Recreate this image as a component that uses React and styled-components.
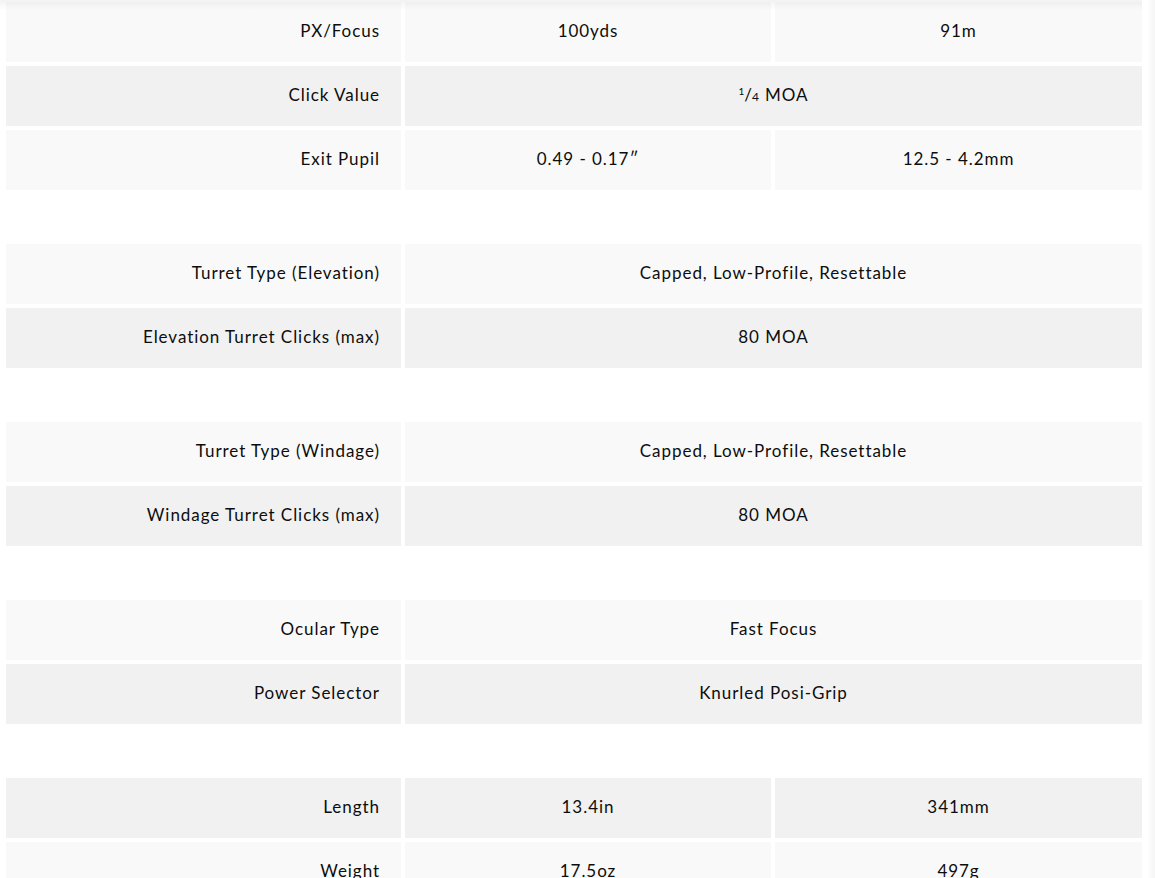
import styled, { createGlobalStyle } from "styled-components";

const GlobalStyle = createGlobalStyle`
  html, body {
    margin: 0;
    padding: 0;
    background: #ffffff;
  }
  body {
    font-family: Lato, "Open Sans", "Liberation Sans", sans-serif;
    color: #111;
    overflow: hidden;
  }
`;

const Page = styled.div`
  position: relative;
  padding: 2px 0 0 6px;
  width: 1136px;
  height: 876px;
  overflow: hidden;
`;

const TopShade = styled.div`
  position: absolute;
  left: 0;
  top: 0;
  width: 1155px;
  height: 10px;
  background: linear-gradient(to bottom, rgba(0, 0, 0, 0.05), rgba(0, 0, 0, 0));
  pointer-events: none;
`;

const SideShade = styled.div`
  position: fixed;
  right: 0;
  top: 0;
  width: 8px;
  height: 878px;
  background: linear-gradient(to left, rgba(0, 0, 0, 0.04), rgba(0, 0, 0, 0));
  pointer-events: none;
`;

const Group = styled.div`
  display: grid;
  grid-template-columns: 395px 366px 367px;
  grid-auto-rows: 60px;
  gap: 4px;
  margin-bottom: 54px;
`;

const Cell = styled.div`
  display: flex;
  align-items: center;
  justify-content: center;
  padding-bottom: 3px;
  box-sizing: border-box;
  background: ${(p) => (p.$dark ? "#f1f1f1" : "#f9f9f9")};
  font-size: 17px;
  letter-spacing: 0.95px;
  color: #0d0d0d;
  grid-column: ${(p) => (p.$span ? "span 2" : "auto")};
`;

const Label = styled(Cell)`
  justify-content: flex-end;
  padding-right: 21px;
`;

const Frac = styled.span`
  display: inline-flex;
  align-items: baseline;
  margin-right: 6px;
  letter-spacing: 0;
  sup {
    font-size: 10px;
    position: relative;
    top: -6px;
    vertical-align: baseline;
    line-height: 1;
  }
  sub {
    font-size: 12px;
    vertical-align: baseline;
    line-height: 1;
  }
`;

const groups = [
  [
    { label: "PX/Focus", values: ["100yds", "91m"] },
    { label: "Click Value", values: ["quarter"] },
    { label: "Exit Pupil", values: ["0.49 - 0.17″", "12.5 - 4.2mm"] },
  ],
  [
    { label: "Turret Type (Elevation)", values: ["Capped, Low-Profile, Resettable"] },
    { label: "Elevation Turret Clicks (max)", values: ["80 MOA"] },
  ],
  [
    { label: "Turret Type (Windage)", values: ["Capped, Low-Profile, Resettable"] },
    { label: "Windage Turret Clicks (max)", values: ["80 MOA"] },
  ],
  [
    { label: "Ocular Type", values: ["Fast Focus"] },
    { label: "Power Selector", values: ["Knurled Posi-Grip"] },
  ],
  [
    { label: "Length", values: ["13.4in", "341mm"], dark: true },
    { label: "Weight", values: ["17.5oz", "497g"], dark: false },
  ],
];

const renderValue = (v) =>
  v === "quarter" ? (
    <>
      <Frac>
        <sup>1</sup>/<sub>4</sub>
      </Frac>
      MOA
    </>
  ) : (
    v
  );

const App = () => {
  return (
    <>
      <GlobalStyle />
      <Page>
        <TopShade />
        {groups.map((rows, gi) => (
          <Group key={gi}>
            {rows.map((row, ri) => {
              const dark = row.dark !== undefined ? row.dark : ri % 2 === 1;
              return [
                <Label key={row.label} $dark={dark}>
                  {row.label}
                </Label>,
                ...row.values.map((v, vi) => (
                  <Cell key={row.label + vi} $dark={dark} $span={row.values.length === 1}>
                    {renderValue(v)}
                  </Cell>
                )),
              ];
            })}
          </Group>
        ))}
      </Page>
      <SideShade />
    </>
  );
};

export default App;
